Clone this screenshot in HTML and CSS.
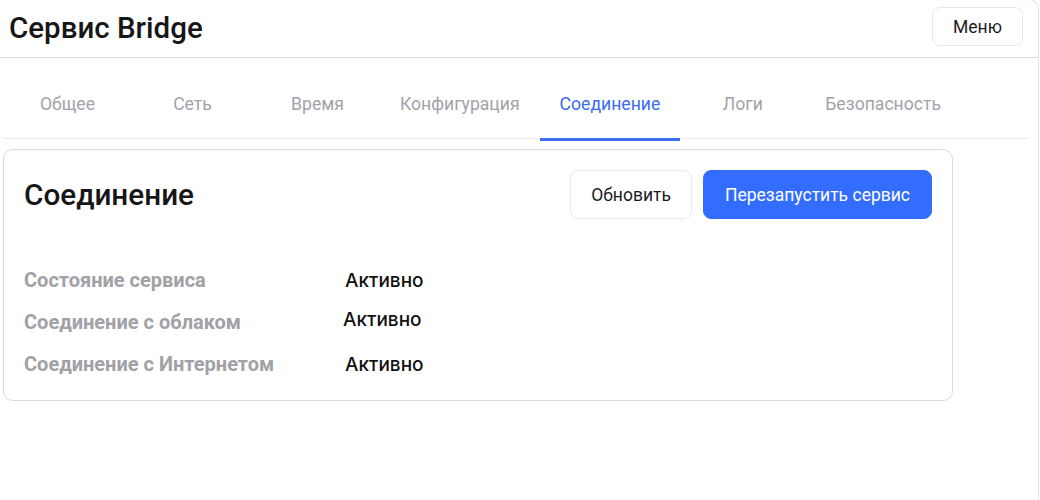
FILE: index.html
```html
<!DOCTYPE html>
<html lang="ru">
<head>
<meta charset="utf-8">
<title>Сервис Bridge</title>
<link rel="stylesheet" href="styles.css">
</head>
<body>
<div class="app">
  <header class="topbar">
    <h1 class="brand">Сервис Bridge</h1>
    <button class="btn btn-menu" type="button">Меню</button>
  </header>
  <nav class="tabs">
    <a class="tab">Общее</a>
    <a class="tab">Сеть</a>
    <a class="tab">Время</a>
    <a class="tab">Конфигурация</a>
    <a class="tab tab-active">Соединение</a>
    <a class="tab">Логи</a>
    <a class="tab">Безопасность</a>
  </nav>
  <section class="card">
    <div class="card-head">
      <h2 class="card-title">Соединение</h2>
      <div class="actions">
        <button class="btn btn-light" type="button">Обновить</button>
        <button class="btn btn-primary" type="button">Перезапустить сервис</button>
      </div>
    </div>
    <div class="rows">
      <div class="row"><span class="label">Состояние сервиса</span><span class="value">Активно</span></div>
      <div class="row"><span class="label">Соединение с облаком</span><span class="value value-raised">Активно</span></div>
      <div class="row"><span class="label">Соединение с Интернетом</span><span class="value">Активно</span></div>
    </div>
  </section>
</div>
</body>
</html>
```

FILE: styles.css
```css
* { box-sizing: border-box; }
html, body { margin: 0; padding: 0; background: #fff; }
body {
  font-family: Roboto, "Noto Sans", "Liberation Sans", sans-serif;
  color: #1b1b1f;
  overflow: hidden;
}
.app {
  width: 1039px;
  min-height: 502px;
  margin-top: -1px;
  border-top: 1px solid #e3e3ea;
  border-right: 1px solid #e3e3ea;
  border-top-right-radius: 10px;
}
.topbar {
  height: 58px;
  border-bottom: 1px solid #dcdce5;
  display: flex;
  justify-content: space-between;
  align-items: flex-start;
  padding: 0 15px 0 9px;
}
.brand {
  margin: 0;
  font-size: 29.5px;
  font-weight: 500;
  line-height: 56px;
  color: #161618;
}
.btn {
  font-family: Roboto, "Noto Sans", sans-serif;
  font-size: 17.5px;
  border-radius: 8px;
  cursor: pointer;
}
.btn-menu {
  margin-top: 7px;
  height: 39px;
  padding: 0 20px;
  background: #fff;
  border: 1px solid #e6e6ee;
  color: #1b1b1f;
}
.tabs {
  display: flex;
  margin: 0 10px 0 3px;
  padding-left: 2px;
  border-bottom: 1px solid #ebebf0;
}
.tab {
  position: relative;
  min-width: 125px;
  height: 80px;
  padding: 12px 20px 0;
  display: flex;
  align-items: center;
  justify-content: center;
  font-size: 17.6px;
  color: #a2a2aa;
  white-space: nowrap;
}
.tab-active { color: #3a6df0; }
.tab-active::after {
  content: "";
  position: absolute;
  left: 0;
  right: 0;
  bottom: -3px;
  height: 3px;
  background: #3a6df0;
}
.card {
  width: 950px;
  margin: 10px 0 0 3px;
  border: 1px solid #d9d9e2;
  border-radius: 10px;
  padding: 20px 20px 15px;
}
.card-head {
  display: flex;
  justify-content: space-between;
  align-items: center;
}
.card-title {
  margin: 0;
  font-size: 29.7px;
  font-weight: 500;
  color: #161618;
}
.actions {
  display: flex;
  gap: 11px;
}
.btn-light {
  height: 49px;
  padding: 0 20px;
  background: #fff;
  border: 1px solid #e8e8f0;
  color: #1b1b1f;
}
.btn-primary {
  height: 49px;
  padding: 0 21px;
  background: #336dff;
  border: 1px solid #336dff;
  color: #fff;
}
.rows {
  margin-top: 40px;
}
.row {
  height: 42px;
  display: flex;
  align-items: center;
}
.label {
  width: 321px;
  font-size: 20px;
  font-weight: 700;
  color: #a1a1a6;
}
.value {
  font-family: Inter, Roboto, sans-serif;
  font-size: 19px;
  font-weight: 500;
  color: #111;
}
.value-raised {
  margin: -6px 0 0 -2px;
}
```
